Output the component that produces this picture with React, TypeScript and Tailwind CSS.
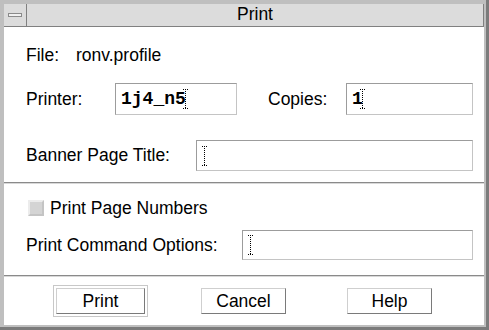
import React from "react";

function Cursor({ h = 20 }: { h?: number }) {
  return (
    <svg width="5" height={h} viewBox={`0 0 5 ${h}`} className="block">
      <g fill="#000">
        <rect x="0" y="0" width="1" height="1" />
        <rect x="2" y="0" width="1" height="1" />
        <rect x="4" y="0" width="1" height="1" />
        {Array.from({ length: Math.floor((h - 2) / 2) }).map((_, i) => (
          <rect key={i} x="2" y={2 + i * 2} width="1" height="1" />
        ))}
        <rect x="0" y={h - 1} width="1" height="1" />
        <rect x="2" y={h - 1} width="1" height="1" />
        <rect x="4" y={h - 1} width="1" height="1" />
      </g>
    </svg>
  );
}

function Field({
  w,
  h,
  value,
}: {
  w: string;
  h: string;
  value?: string;
}) {
  return (
    <div
      className={`${w} ${h} flex items-center border border-t-[#9c9c9c] border-l-[#9c9c9c] border-b-[#c4c4c4] border-r-[#c4c4c4] bg-white pl-[5px]`}
    >
      {value ? (
        <span className="font-['Liberation_Mono',monospace] text-[18px] leading-none font-bold">
          {value}
        </span>
      ) : null}
      <span className={value ? "ml-[-3px]" : ""}>
        <Cursor h={20} />
      </span>
    </div>
  );
}

function Button({ label, className = "" }: { label: string; className?: string }) {
  return (
    <div
      className={`w-[85px] h-[26px] flex items-center justify-center bg-white border border-t-[#cfcfcf] border-l-[#cfcfcf] border-b-[#7a7a7a] border-r-[#7a7a7a] text-[17.5px] text-black ${className}`}
    >
      {label}
    </div>
  );
}

export default function App() {
  return (
    <div className="w-[489px] h-[330px] bg-[#7b7b7b] pr-[3px] pb-[3px] font-['Liberation_Sans',Arial,sans-serif] text-black">
      <div className="w-full h-full bg-[#bfbfbf] pl-[4px] pt-[4px] pr-[2px] pb-[2px] flex flex-col">
        {/* Title bar */}
        <div className="h-[23px] flex bg-[#dcdcdc] border-b border-r border-[#808080]">
          <div className="w-[23px] h-full border-r border-[#808080] flex items-center justify-center">
            <div className="w-[14px] h-[4px] bg-[#f0f0f0] border border-[#8a8a8a]" />
          </div>
          <div className="flex-1 flex items-center justify-center text-[17.5px] leading-none">
            Print
          </div>
        </div>

        {/* Body */}
        <div className="flex-1 bg-white flex flex-col">
          {/* Section 1 */}
          <div className="h-[155px] pl-[22px] flex flex-col">
            <div className="mt-[14px] h-[28px] flex items-center text-[17.5px]">
              <span className="w-[50px]">File:</span>
              <span>ronv.profile</span>
            </div>
            <div className="mt-[14px] h-[32px] flex items-center text-[17.5px]">
              <span className="w-[89px]">Printer:</span>
              <Field w="w-[122px]" h="h-[32px]" value="1j4_n5" />
              <span className="ml-[31px] w-[78px]">Copies:</span>
              <Field w="w-[127px]" h="h-[32px]" value="1" />
            </div>
            <div className="mt-[25px] h-[31px] flex items-center text-[17.5px]">
              <span className="w-[170px]">Banner Page Title:</span>
              <Field w="w-[277px]" h="h-[31px]" />
            </div>
          </div>

          <div className="h-[2px] border-t border-[#8a8a8a] border-b border-b-[#d8d8d8]" />

          {/* Section 2 */}
          <div className="h-[91px] pl-[22px] flex flex-col">
            <div className="mt-[16px] h-[16px] flex items-center text-[17.5px]">
              <div className="ml-[2px] w-[16px] h-[16px] bg-[#d4d4d4] border-2 border-t-[#ececec] border-l-[#ececec] border-b-[#c4c4c4] border-r-[#c4c4c4]" />
              <span className="ml-[6px]">Print Page Numbers</span>
            </div>
            <div className="mt-[14px] h-[30px] flex items-center text-[17.5px]">
              <span className="w-[216px]">Print Command Options:</span>
              <Field w="w-[231px]" h="h-[30px]" />
            </div>
          </div>

          <div className="h-[2px] border-t border-[#8a8a8a] border-b border-b-[#d8d8d8]" />

          {/* Section 3 */}
          <div className="h-[48px] flex items-center">
            <div className="ml-[49px] w-[95px] h-[32px] border border-[#c8c8c8] p-[2px] flex">
              <Button label="Print" className="w-[89px]! h-[26px]!" />
            </div>
            <Button label="Cancel" className="ml-[53px]" />
            <Button label="Help" className="ml-[61px]" />
          </div>
        </div>
      </div>
    </div>
  );
}
